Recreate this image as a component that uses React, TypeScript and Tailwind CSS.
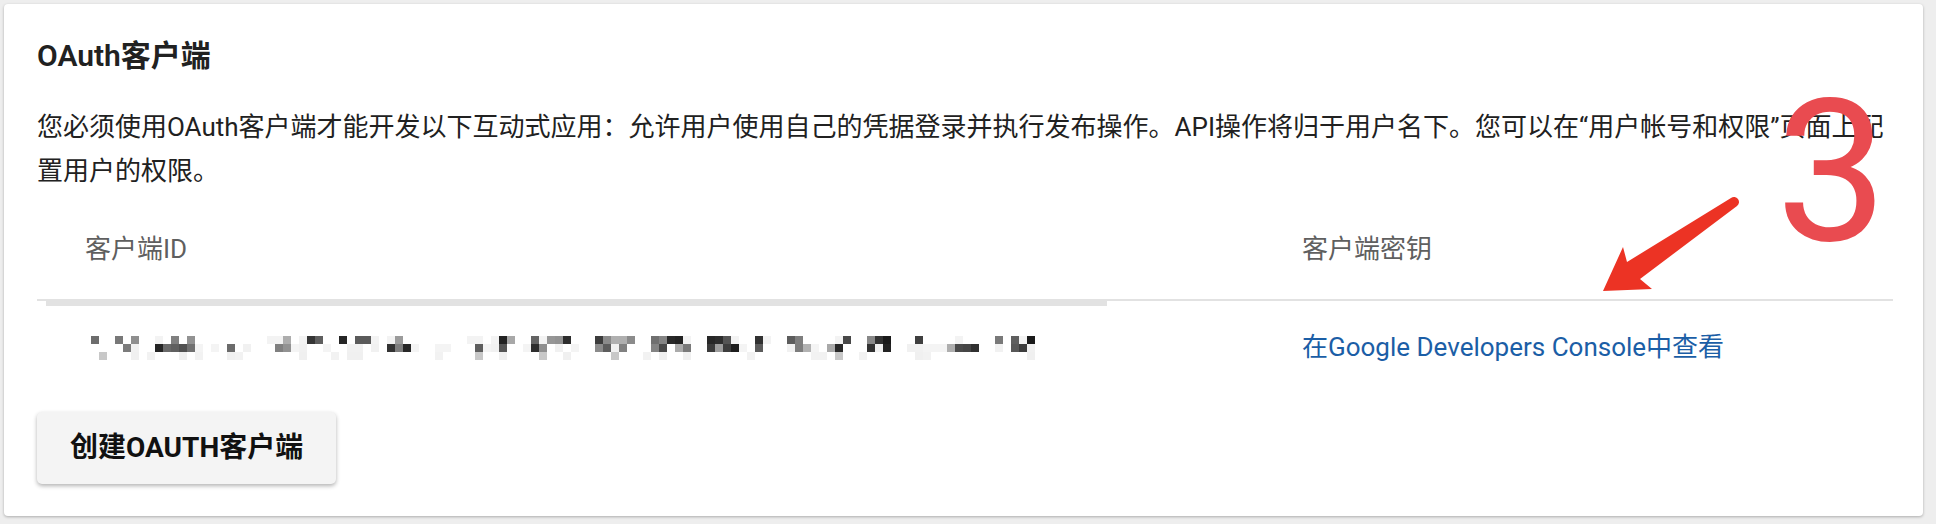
import { useMemo } from "react";

const font = "font-['Roboto','Noto_Sans_CJK_SC',sans-serif]";

function mulberry32(seed: number) {
  let a = seed;
  return () => {
    a |= 0;
    a = (a + 0x6d2b79f5) | 0;
    let t = Math.imul(a ^ (a >>> 15), 1 | a);
    t = (t + Math.imul(t ^ (t >>> 7), 61 | t)) ^ t;
    return ((t ^ (t >>> 14)) >>> 0) / 4294967296;
  };
}

type Cell = string | null;

function usePixels(cols: number) {
  return useMemo(() => {
    const r = mulberry32(11);
    const gray = () => {
      const v = Math.floor(25 + r() * 160);
      return `rgb(${v},${v},${v})`;
    };
    const out: Cell[][] = [];
    while (out.length < cols) {
      const len = 1 + Math.floor(r() * 5);
      for (let k = 0; k < len && out.length < cols; k++) {
        out.push([
          r() < 0.45 ? gray() : r() < 0.4 ? "#f3f3f3" : null,
          r() < 0.5 ? gray() : r() < 0.4 ? "#f1f1f1" : null,
          r() < 0.2 ? (r() < 0.3 ? "#c8c8c8" : "#f0f0f0") : null,
        ]);
      }
      const gap = 1 + Math.floor(r() * 3);
      for (let k = 0; k < gap && out.length < cols; k++) {
        out.push([null, r() < 0.3 ? "#f4f4f4" : null, r() < 0.3 ? "#f2f2f2" : null]);
      }
    }
    return out;
  }, [cols]);
}

function BlurredId() {
  const cells = usePixels(119);
  return (
    <div className="mt-[2px] flex">
      {cells.map((col, i) => (
        <div key={i} className="flex flex-col">
          {col.map((c, j) => (
            <div
              key={j}
              className="h-[8px] w-[8px]"
              style={{ backgroundColor: c ?? "transparent" }}
            />
          ))}
        </div>
      ))}
    </div>
  );
}

export default function App() {
  return (
    <div className={`h-[524px] bg-[#eeeeee] pt-[4px] pl-[4px] pr-[13px] ${font}`}>
      <div className="relative rounded-[4px] bg-white pt-[34px] pr-[30px] pb-[32px] pl-[33px] shadow-[0_1px_3px_rgba(0,0,0,0.28)]">
        <h2 className="text-[30px] leading-[36px] font-semibold text-[#212121]">
          OAuth客户端
        </h2>

        <p className="mt-[31px] text-[26px] leading-[44px] text-[#212121]">
          您必须使用OAuth客户端才能开发以下互动式应用：允许用户使用自己的凭据登录并执行发布操作。API操作将归于用户名下。您可以在“用户帐号和权限”页面上配置用户的权限。
        </p>

        <div className="grid grid-cols-[1217px_1fr] text-[26px]">
          <div className="flex h-[106px] items-center pt-[6px] pl-[48px] text-[#5f5f5f]">
            客户端ID
          </div>
          <div className="flex h-[106px] items-center pt-[6px] pl-[48px] text-[#5f5f5f]">
            客户端密钥
          </div>

          <div className="relative col-span-2 h-[2px] bg-[#e2e2e2]">
            <div className="absolute top-[1px] left-[9px] h-[6px] w-[1061px] bg-[#e2e2e2]" />
          </div>

          <div className="flex h-[92px] items-center pl-[46px]">
            <BlurredId />
          </div>
          <div className="flex h-[92px] items-center pl-[48px]">
            <a className="cursor-pointer text-[#1b5ea6]">
              在Google Developers Console中查看
            </a>
          </div>
        </div>

        <button className="mt-[19px] h-[72px] rounded-[5px] bg-[#f4f4f4] px-[33px] text-[28px] font-bold text-[#111] shadow-[0_2px_4px_rgba(0,0,0,0.3)]">
          创建OAUTH客户端
        </button>

        <div className="pointer-events-none absolute top-[69px] left-[1772px] font-[Roboto,sans-serif] text-[198px] leading-none font-normal text-[#e94b50]">
          3
        </div>

        <svg
          className="pointer-events-none absolute top-[186px] left-[1586px]"
          width="160"
          height="110"
          viewBox="0 0 160 110"
        >
          <path
            d="M13 101 L33 57 L37 72 L141 8 A5 5 0 0 1 147 16 L50 89 L62 99 Z"
            fill="#ec3324"
          />
        </svg>
      </div>
    </div>
  );
}
